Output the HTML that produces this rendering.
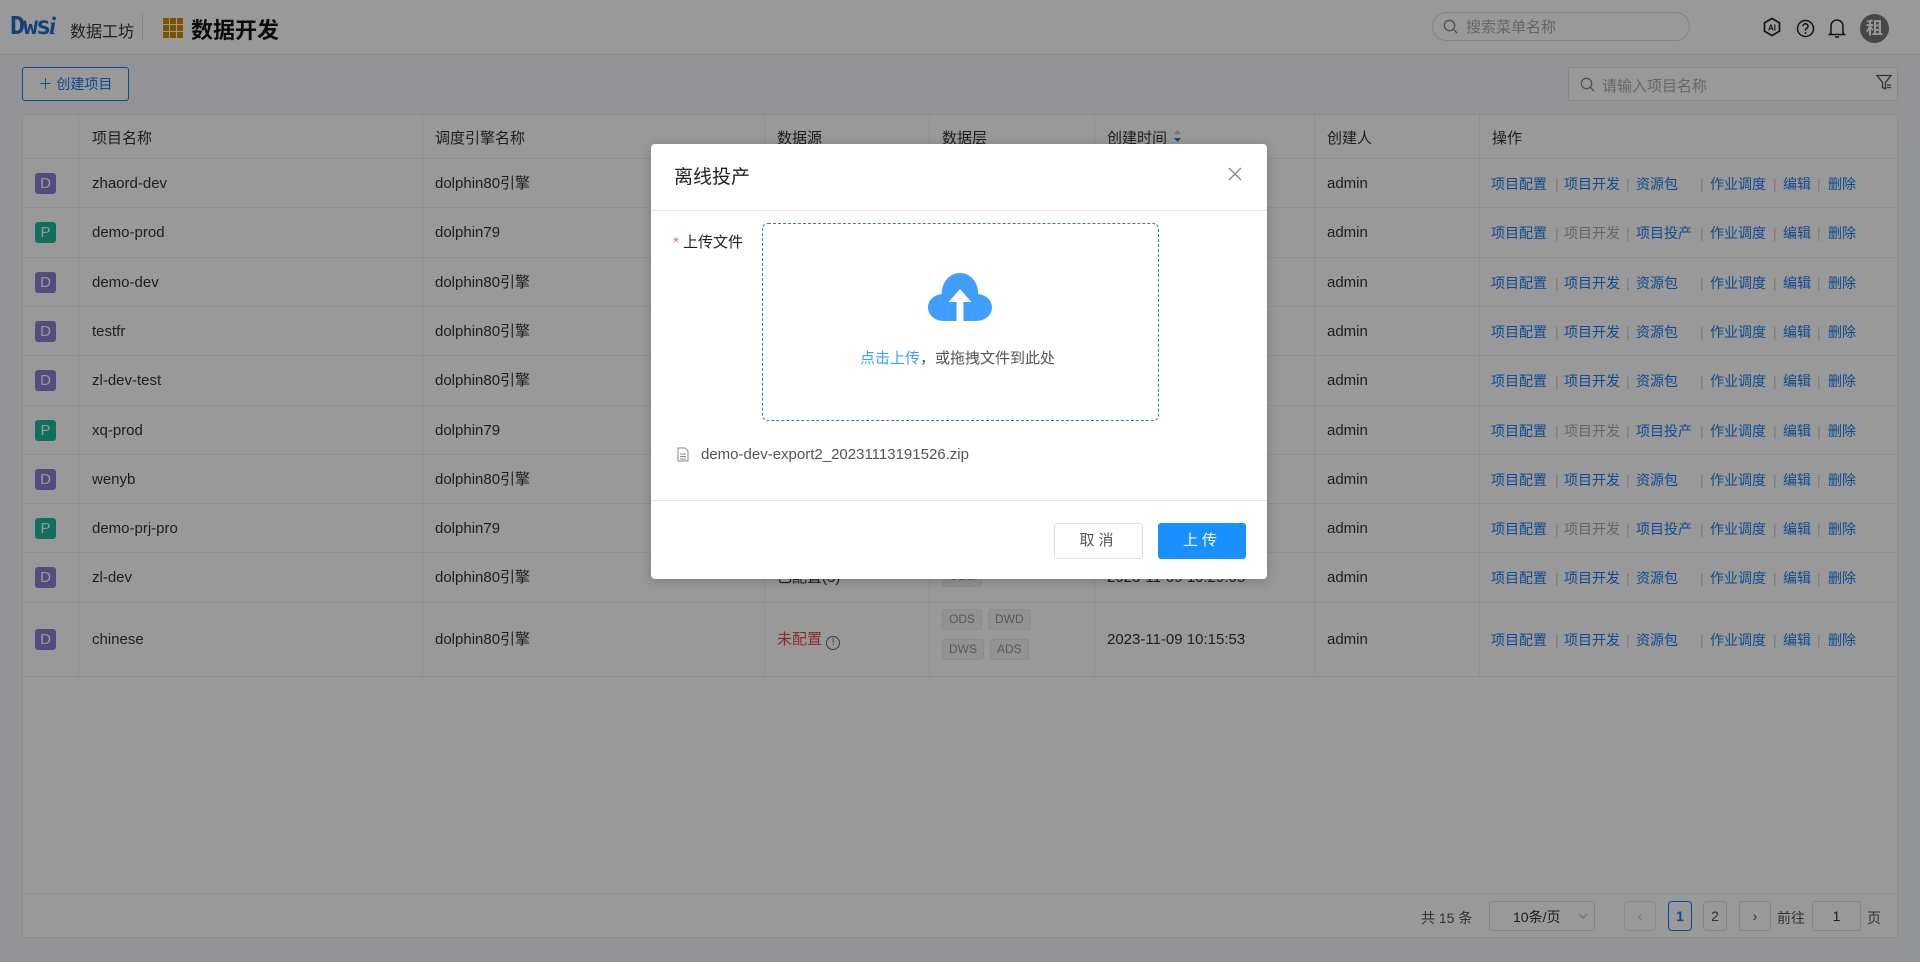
<!DOCTYPE html>
<html><head><meta charset="utf-8"><style>
*{box-sizing:border-box;margin:0;padding:0}
body{width:1920px;height:962px;position:relative;overflow:hidden;background:#f5f6f8;font-family:"Liberation Sans","Noto Sans CJK SC",sans-serif;color:#333;font-size:14px}
.a{position:absolute}
.hdr{left:0;top:0;width:1920px;height:55px;background:#fff;border-bottom:1px solid #e4e4e4}
.tbl{left:22px;top:114px;width:1876px;height:824px;background:#fff;border:1px solid #e8e8e8}
.hl{position:absolute;left:0;width:1874px;height:1px;background:#ebeef5}
.vl{position:absolute;top:0;width:1px;height:561px;background:#ebeef5}
.r{position:absolute;left:0;width:1874px;height:22px}
.r>*{position:absolute;top:1px;white-space:nowrap;font-size:15px;color:#333;line-height:20px}
.av{left:12px!important;top:0!important;width:21px;height:21px;border-radius:3px;color:#fff!important;text-align:center;line-height:21px!important;background:#8b80d0}
.av.p{background:#1dbb9c}
.n{left:69px}.e{left:412px}.ds{left:754px}.ly{left:919px}.tm{left:1084px}.cr{left:1304px}
.ops{left:1468px;font-size:14px!important;color:#1a7cf0!important}
.ops span{position:absolute;top:0;white-space:nowrap}
.ops .s{color:#ccc}
.ops .g{color:#aaa}
.tag{display:inline-block;background:#f4f4f5;border:1px solid #e9e9eb;color:#909399;font-size:12px;padding:0 6px;height:21px;line-height:19px;border-radius:3px;margin-right:6px}
.cell{position:absolute;white-space:nowrap;font-size:15px;color:#333}
.mask{left:0;top:0;width:1920px;height:962px;background:rgba(0,0,0,.4)}
.btn{position:absolute;border-radius:3px;font-size:15px;text-align:center}
</style></head><body>
<div class="a hdr">
 <div class="a" style="left:10px;top:11px;font-size:25px;font-weight:bold;color:#1e6fc9;letter-spacing:-2px;font-family:'DejaVu Sans Mono',monospace">Dws<i style="font-family:'Liberation Serif',serif">i</i></div>
 <div class="a" style="left:70px;top:18px;font-size:16px;color:#333">数据工坊</div>
 <div class="a" style="left:142px;top:13px;width:1px;height:27px;background:#ddd"></div>
 <div class="a" style="left:163px;top:18px;width:20px;height:20px;display:grid;grid-template-columns:repeat(3,6px);grid-template-rows:repeat(3,6px);gap:1px">
  <i style="background:#d08a00"></i><i style="background:#d08a00"></i><i style="background:#d08a00"></i><i style="background:#d08a00"></i><i style="background:#d08a00"></i><i style="background:#d08a00"></i><i style="background:#d08a00"></i><i style="background:#d08a00"></i><i style="background:#d08a00"></i></div>
 <div class="a" style="left:191px;top:13px;font-size:22px;font-weight:bold;color:#111">数据开发</div>
 <div class="a" style="left:1432px;top:12px;width:258px;height:29px;border:1px solid #ddd;border-radius:15px"></div>
 <svg class="a" style="left:1443px;top:19px" width="15" height="15" viewBox="0 0 15 15"><circle cx="6.5" cy="6.5" r="5.2" fill="none" stroke="#888" stroke-width="1.3"/><path d="M10.5 10.5L14 14" stroke="#888" stroke-width="1.3"/></svg>
 <div class="a" style="left:1466px;top:16px;font-size:15px;color:#aaa">搜索菜单名称</div>
 <svg class="a" style="left:1762px;top:17px" width="20" height="20" viewBox="0 0 20 20"><path d="M10 1.5L17.5 5.8V14.2L10 18.5L2.5 14.2V5.8Z" fill="none" stroke="#222" stroke-width="1.7"/><text x="10" y="13.5" font-size="8" font-weight="bold" text-anchor="middle" font-family="Liberation Sans" fill="#222">AI</text></svg>
 <svg class="a" style="left:1796px;top:19px" width="19" height="19" viewBox="0 0 19 19"><circle cx="9.5" cy="9.5" r="8" fill="none" stroke="#222" stroke-width="1.5"/><path d="M7 7.3a2.5 2.5 0 1 1 3.3 2.3c-.6.3-.8.7-.8 1.4v.7" fill="none" stroke="#222" stroke-width="1.5"/><circle cx="9.5" cy="14" r="1" fill="#222"/></svg>
 <svg class="a" style="left:1828px;top:17px" width="18" height="22" viewBox="0 0 18 22"><path d="M3 16V9a6 6 0 0 1 12 0v7l1.5 1.5h-15Z" fill="none" stroke="#222" stroke-width="1.5"/><path d="M7 20h4" stroke="#222" stroke-width="1.5"/></svg>
 <div class="a" style="left:1860px;top:14px;width:29px;height:29px;border-radius:50%;background:#777;color:#fff;font-size:17px;font-weight:bold;text-align:center;line-height:29px">租</div>
</div>
<div class="a" style="left:22px;top:67px;width:107px;height:34px;border:1px solid #1a7cf0;border-radius:3px;background:#fff;color:#1a7cf0;font-size:14px;line-height:32px;text-align:center">＋ 创建项目</div>
<div class="a" style="left:1568px;top:67px;width:330px;height:34px;border:1px solid #dcdfe6;border-radius:3px;background:#fff"></div>
<svg class="a" style="left:1580px;top:77px" width="15" height="15" viewBox="0 0 15 15"><circle cx="6.5" cy="6.5" r="5.2" fill="none" stroke="#888" stroke-width="1.3"/><path d="M10.5 10.5L14 14" stroke="#888" stroke-width="1.3"/></svg>
<div class="a" style="left:1602px;top:75px;font-size:15px;color:#aaa">请输入项目名称</div>
<svg class="a" style="left:1876px;top:74px" width="16" height="17" viewBox="0 0 16 17"><path d="M1 1.5h14l-5.5 7V15l-3-1.5V8.5Z" fill="none" stroke="#555" stroke-width="1.3"/><path d="M11 11h4M11 13.5h4" stroke="#555" stroke-width="1.2"/></svg>

<div class="a tbl">
 <div class="cell" style="left:69px;top:12px">项目名称</div>
 <div class="cell" style="left:412px;top:12px">调度引擎名称</div>
 <div class="cell" style="left:754px;top:12px">数据源</div>
 <div class="cell" style="left:919px;top:12px">数据层</div>
 <div class="cell" style="left:1084px;top:12px">创建时间</div>
 <svg class="a" style="left:1150px;top:13px" width="9" height="16" viewBox="0 0 9 16"><path d="M4.5 2L8 6H1Z" fill="#c0c4cc"/><path d="M4.5 14L8 10H1Z" fill="#1a7cf0"/></svg>
 <div class="cell" style="left:1304px;top:12px">创建人</div>
 <div class="cell" style="left:1469px;top:12px">操作</div>

 <div class="hl" style="top:43px"></div><div class="hl" style="top:92px"></div><div class="hl" style="top:142px"></div><div class="hl" style="top:191px"></div><div class="hl" style="top:240px"></div><div class="hl" style="top:290px"></div><div class="hl" style="top:339px"></div><div class="hl" style="top:388px"></div><div class="hl" style="top:437px"></div><div class="hl" style="top:487px"></div><div class="hl" style="top:561px"></div>
 <div class="vl" style="left:55px"></div><div class="vl" style="left:399px"></div><div class="vl" style="left:741px"></div><div class="vl" style="left:906px"></div><div class="vl" style="left:1071px"></div><div class="vl" style="left:1291px"></div><div class="vl" style="left:1456px"></div>

 <div class="r" style="top:58px"><div class="av">D</div><div class="n">zhaord-dev</div><div class="e">dolphin80引擎</div><div class="ds">已配置(3)</div><div class="tm">2023-11-09 10:29:05</div><div class="cr">admin</div><div class="ops"><span style="left:0">项目配置</span><span class="s" style="left:64px">|</span><span style="left:73px">项目开发</span><span class="s" style="left:135px">|</span><span style="left:145px">资源包</span><span class="s" style="left:209px">|</span><span style="left:219px">作业调度</span><span class="s" style="left:282px">|</span><span style="left:292px">编辑</span><span class="s" style="left:326px">|</span><span style="left:337px">删除</span></div></div>
 <div class="r" style="top:107px"><div class="av p">P</div><div class="n">demo-prod</div><div class="e">dolphin79</div><div class="ds">已配置(3)</div><div class="tm">2023-11-09 10:29:05</div><div class="cr">admin</div><div class="ops"><span style="left:0">项目配置</span><span class="s" style="left:64px">|</span><span class="g" style="left:73px">项目开发</span><span class="s" style="left:135px">|</span><span style="left:145px">项目投产</span><span class="s" style="left:209px">|</span><span style="left:219px">作业调度</span><span class="s" style="left:282px">|</span><span style="left:292px">编辑</span><span class="s" style="left:326px">|</span><span style="left:337px">删除</span></div></div>
 <div class="r" style="top:157px"><div class="av">D</div><div class="n">demo-dev</div><div class="e">dolphin80引擎</div><div class="ds">已配置(3)</div><div class="tm">2023-11-09 10:29:05</div><div class="cr">admin</div><div class="ops"><span style="left:0">项目配置</span><span class="s" style="left:64px">|</span><span style="left:73px">项目开发</span><span class="s" style="left:135px">|</span><span style="left:145px">资源包</span><span class="s" style="left:209px">|</span><span style="left:219px">作业调度</span><span class="s" style="left:282px">|</span><span style="left:292px">编辑</span><span class="s" style="left:326px">|</span><span style="left:337px">删除</span></div></div>
 <div class="r" style="top:206px"><div class="av">D</div><div class="n">testfr</div><div class="e">dolphin80引擎</div><div class="ds">已配置(3)</div><div class="tm">2023-11-09 10:29:05</div><div class="cr">admin</div><div class="ops"><span style="left:0">项目配置</span><span class="s" style="left:64px">|</span><span style="left:73px">项目开发</span><span class="s" style="left:135px">|</span><span style="left:145px">资源包</span><span class="s" style="left:209px">|</span><span style="left:219px">作业调度</span><span class="s" style="left:282px">|</span><span style="left:292px">编辑</span><span class="s" style="left:326px">|</span><span style="left:337px">删除</span></div></div>
 <div class="r" style="top:255px"><div class="av">D</div><div class="n">zl-dev-test</div><div class="e">dolphin80引擎</div><div class="ds">已配置(3)</div><div class="tm">2023-11-09 10:29:05</div><div class="cr">admin</div><div class="ops"><span style="left:0">项目配置</span><span class="s" style="left:64px">|</span><span style="left:73px">项目开发</span><span class="s" style="left:135px">|</span><span style="left:145px">资源包</span><span class="s" style="left:209px">|</span><span style="left:219px">作业调度</span><span class="s" style="left:282px">|</span><span style="left:292px">编辑</span><span class="s" style="left:326px">|</span><span style="left:337px">删除</span></div></div>
 <div class="r" style="top:305px"><div class="av p">P</div><div class="n">xq-prod</div><div class="e">dolphin79</div><div class="ds">已配置(3)</div><div class="tm">2023-11-09 10:29:05</div><div class="cr">admin</div><div class="ops"><span style="left:0">项目配置</span><span class="s" style="left:64px">|</span><span class="g" style="left:73px">项目开发</span><span class="s" style="left:135px">|</span><span style="left:145px">项目投产</span><span class="s" style="left:209px">|</span><span style="left:219px">作业调度</span><span class="s" style="left:282px">|</span><span style="left:292px">编辑</span><span class="s" style="left:326px">|</span><span style="left:337px">删除</span></div></div>
 <div class="r" style="top:354px"><div class="av">D</div><div class="n">wenyb</div><div class="e">dolphin80引擎</div><div class="ds">已配置(3)</div><div class="tm">2023-11-09 10:29:05</div><div class="cr">admin</div><div class="ops"><span style="left:0">项目配置</span><span class="s" style="left:64px">|</span><span style="left:73px">项目开发</span><span class="s" style="left:135px">|</span><span style="left:145px">资源包</span><span class="s" style="left:209px">|</span><span style="left:219px">作业调度</span><span class="s" style="left:282px">|</span><span style="left:292px">编辑</span><span class="s" style="left:326px">|</span><span style="left:337px">删除</span></div></div>
 <div class="r" style="top:403px"><div class="av p">P</div><div class="n">demo-prj-pro</div><div class="e">dolphin79</div><div class="ds">已配置(3)</div><div class="tm">2023-11-09 10:29:05</div><div class="cr">admin</div><div class="ops"><span style="left:0">项目配置</span><span class="s" style="left:64px">|</span><span class="g" style="left:73px">项目开发</span><span class="s" style="left:135px">|</span><span style="left:145px">项目投产</span><span class="s" style="left:209px">|</span><span style="left:219px">作业调度</span><span class="s" style="left:282px">|</span><span style="left:292px">编辑</span><span class="s" style="left:326px">|</span><span style="left:337px">删除</span></div></div>
 <div class="r" style="top:452px"><div class="av">D</div><div class="n">zl-dev</div><div class="e">dolphin80引擎</div><div class="ds">已配置(3)</div><div class="ly" style="top:-1px"><span class="tag">ODS</span></div><div class="tm">2023-11-09 10:29:05</div><div class="cr">admin</div><div class="ops"><span style="left:0">项目配置</span><span class="s" style="left:64px">|</span><span style="left:73px">项目开发</span><span class="s" style="left:135px">|</span><span style="left:145px">资源包</span><span class="s" style="left:209px">|</span><span style="left:219px">作业调度</span><span class="s" style="left:282px">|</span><span style="left:292px">编辑</span><span class="s" style="left:326px">|</span><span style="left:337px">删除</span></div></div>
 <div class="r" style="top:514px"><div class="av">D</div><div class="n">chinese</div><div class="e">dolphin80引擎</div><div class="ds" style="color:#e34d4d">未配置 <span style="display:inline-block;width:14px;height:14px;border:1px solid #666;border-radius:50%;font-size:10px;line-height:12px;text-align:center;color:#666;vertical-align:-1px">!</span></div><div class="ly" style="top:-20px"><span class="tag">ODS</span><span class="tag">DWD</span></div><div class="ly" style="top:10px"><span class="tag">DWS</span><span class="tag">ADS</span></div><div class="tm">2023-11-09 10:15:53</div><div class="cr">admin</div><div class="ops"><span style="left:0">项目配置</span><span class="s" style="left:64px">|</span><span style="left:73px">项目开发</span><span class="s" style="left:135px">|</span><span style="left:145px">资源包</span><span class="s" style="left:209px">|</span><span style="left:219px">作业调度</span><span class="s" style="left:282px">|</span><span style="left:292px">编辑</span><span class="s" style="left:326px">|</span><span style="left:337px">删除</span></div></div>

 <div class="a" style="left:0;top:778px;width:1874px;height:1px;background:#ebeef5"></div>
 <div class="cell" style="left:1398px;top:793px;font-size:14px;color:#555">共 15 条</div>
 <div class="a" style="left:1466px;top:786px;width:106px;height:30px;border:1px solid #dcdfe6;border-radius:3px"></div>
 <div class="cell" style="left:1490px;top:792px;font-size:14px;color:#333">10条/页</div>
 <svg class="a" style="left:1555px;top:797px" width="10" height="8" viewBox="0 0 10 8"><path d="M1 2l4 4 4-4" fill="none" stroke="#bbb" stroke-width="1.2"/></svg>
 <div class="a" style="left:1601px;top:786px;width:32px;height:30px;border:1px solid #e4e4e4;border-radius:3px;color:#ccc;text-align:center;line-height:28px">‹</div>
 <div class="a" style="left:1645px;top:786px;width:24px;height:30px;border:1px solid #1a7cf0;border-radius:4px;color:#1a7cf0;font-weight:bold;text-align:center;line-height:28px">1</div>
 <div class="a" style="left:1680px;top:786px;width:24px;height:30px;border:1px solid #dcdfe6;border-radius:4px;color:#555;text-align:center;line-height:28px">2</div>
 <div class="a" style="left:1716px;top:786px;width:32px;height:30px;border:1px solid #dcdfe6;border-radius:3px;color:#555;text-align:center;line-height:28px">›</div>
 <div class="cell" style="left:1754px;top:793px;font-size:14px;color:#555">前往</div>
 <div class="a" style="left:1789px;top:786px;width:49px;height:30px;border:1px solid #dcdfe6;border-radius:3px;text-align:center;line-height:28px;color:#333">1</div>
 <div class="cell" style="left:1844px;top:793px;font-size:14px;color:#555">页</div>
</div>
<div class="a mask"></div>
<div class="a" style="left:651px;top:144px;width:616px;height:435px;background:#fff;border-radius:4px;box-shadow:0 2px 12px rgba(0,0,0,.2)">
 <div class="a" style="left:23px;top:18px;font-size:19px;color:#222">离线投产</div>
 <svg class="a" style="left:576px;top:22px" width="16" height="16" viewBox="0 0 16 16"><path d="M2 2L14 14M14 2L2 14" stroke="#888" stroke-width="1.4"/></svg>
 <div class="a" style="left:0;top:66px;width:616px;height:1px;background:#e8e8e8"></div>
 <div class="a" style="left:22px;top:87px;font-size:15px;color:#222"><span style="color:#f56c6c">*</span> 上传文件</div>
 <div class="a" style="left:111px;top:79px;width:397px;height:198px;border:1px dashed #3b75c9;border-radius:6px"></div>
 <svg class="a" style="left:277px;top:128px" width="64" height="50" viewBox="0 0 56 50" preserveAspectRatio="none"><path d="M14 49C6 49 0 43 0 35.5C0 28.5 5 23 12 22C12 10 19 1 28 1C37 1 44 10 44 22C51 23 56 28.5 56 35.5C56 43 50 49 42 49Z" fill="#409eff"/><path d="M28 17L38 30H31V49H25V30H18Z" fill="#fff"/></svg>
 <div class="a" style="left:209px;top:203px;font-size:15px;color:#555"><span style="color:#409eff">点击上传</span>，或拖拽文件到此处</div>
 <svg class="a" style="left:26px;top:303px" width="12" height="15" viewBox="0 0 12 15"><path d="M1 1h7l3 3v10H1Z" fill="none" stroke="#888" stroke-width="1"/><path d="M3 7h6M3 9.5h6M3 12h6" stroke="#888"/></svg>
 <div class="a" style="left:50px;top:302px;font-size:15px;color:#555">demo-dev-export2_20231113191526.zip</div>
 <div class="a" style="left:0;top:356px;width:616px;height:1px;background:#e8e8e8"></div>
 <div class="btn" style="left:403px;top:379px;width:89px;height:36px;border:1px solid #dcdfe6;color:#555;line-height:34px;letter-spacing:4px">取消</div>
 <div class="btn" style="left:507px;top:379px;width:88px;height:36px;background:#1890ff;color:#fff;line-height:36px;letter-spacing:4px">上传</div>
</div>
</body></html>
